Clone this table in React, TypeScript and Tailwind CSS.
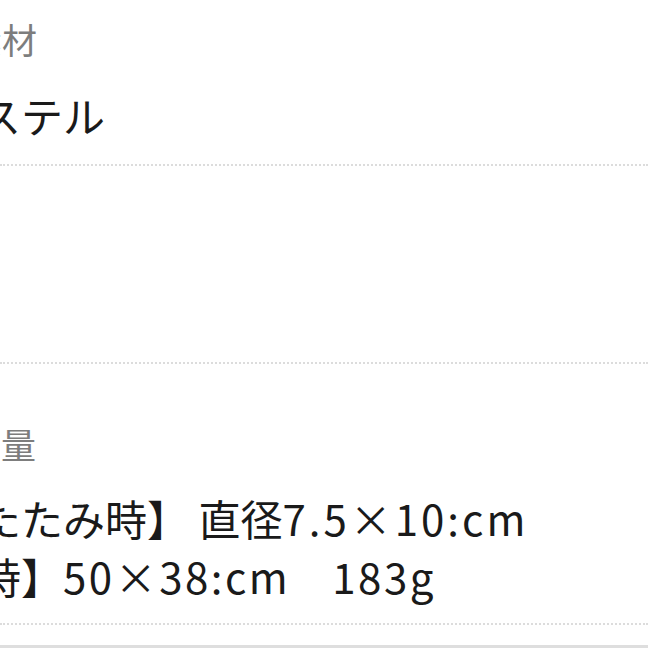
const specs = [
  {
    label: "素材",
    labelShift: "-ml-[33px]",
    lines: [[{ t: "ポリエステル" }]],
    pad: "pt-[15px] pb-[20px]",
    gap: "mt-[23px]",
  },
  { label: "", labelShift: "", lines: [], pad: "h-[198px]", gap: "" },
  {
    label: "重量",
    labelShift: "-ml-[34px]",
    lines: [
      [{ t: "【折りたたみ時】 直径" }, { t: "7.5×10:cm", latin: true, wide: true }],
      [{ t: "【展開時】" }, { t: "50×38:cm", latin: true }, { t: "　" }, { t: "183g", latin: true }],
    ],
    pad: "pt-[56px] pb-[18px]",
    gap: "mt-[21px]",
  },
];

export default function App() {
  return (
    <div className="w-[648px] h-[648px] overflow-hidden bg-white font-['Noto_Sans_CJK_JP','Noto_Sans',sans-serif]">
      {specs.map((s, i) => (
        <section
          key={i}
          className={`border-b-2 border-dotted border-[#dcdcdc] ${s.pad}`}
        >
          {s.label && (
            <div className={`${s.labelShift} text-[35px] leading-[48px] text-[#7d7d7d] whitespace-nowrap`}>
              {s.label}
            </div>
          )}
          {s.lines.length > 0 && (
            <div className={`-ml-[147px] ${s.gap} text-[42px] leading-[58px] text-[#1a1a1a] whitespace-nowrap`}>
              {s.lines.map((parts, j) => (
                <p key={j}>
                  {parts.map((p, k) => (
                    <span
                      key={k}
                      className={p.latin ? (p.wide ? "tracking-[3px]" : "tracking-[2.5px]") : ""}
                    >
                      {p.t}
                    </span>
                  ))}
                </p>
              ))}
            </div>
          )}
        </section>
      ))}
      <div className="mt-[20px] border-t-[3px] border-[#dedede]" />
    </div>
  );
}
